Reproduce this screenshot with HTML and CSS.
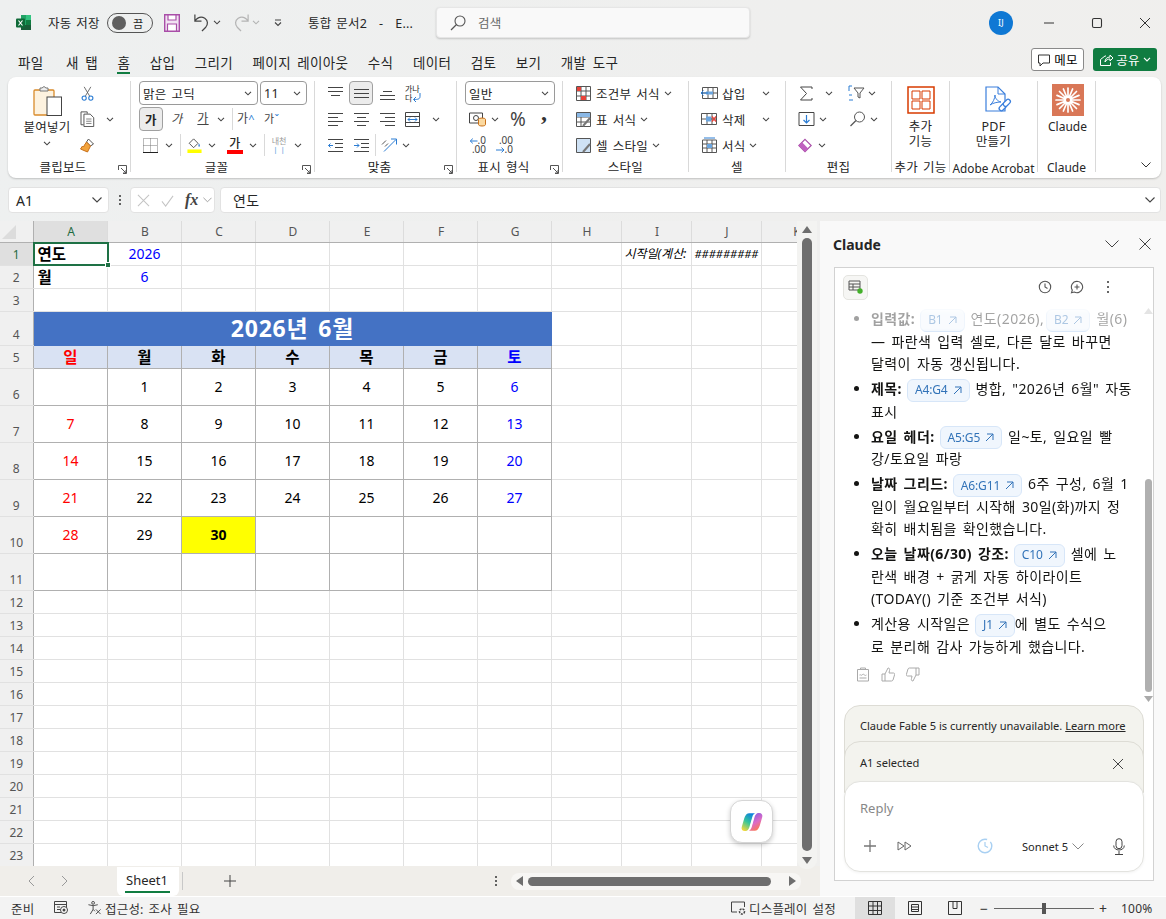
FILE: index.html
```html
<!DOCTYPE html>
<html lang="ko">

<head>
  <meta charset="UTF-8">
  <meta name="viewport" content="width=device-width, initial-scale=1.0">
  <title>통합 문서2 - Excel</title>
  <link rel="stylesheet" href="styles.css">
</head>

<body>
  <svg class="sprite">
    <symbol id="chev" viewBox="0 0 8 5"><path d="M1 .8l3 3 3-3" fill="none" stroke="#444" stroke-width="1.1"/></symbol>
    <symbol id="launch" viewBox="0 0 9 9"><path d="M.5 5V.5H8.500V8.500H5M3 3l5 5M8 5v3H5" fill="none" stroke="#555"/></symbol>
    <symbol id="lines4l" viewBox="0 0 15 15"><path d="M0 1.500h15M0 5.500h10M0 9.500h15M0 13.500h10" stroke="#444" fill="none"/></symbol>
    <symbol id="lines4c" viewBox="0 0 15 15"><path d="M0 1.500h15M3 5.500h9M0 9.500h15M3 13.500h9" stroke="#444" fill="none"/></symbol>
    <symbol id="lines4r" viewBox="0 0 15 15"><path d="M0 1.500h15M5 5.500h10M0 9.500h15M5 13.500h10" stroke="#444" fill="none"/></symbol>
  </svg>

  <header class="titlebar">
    <svg class="app-icon" viewBox="0 0 16 17"><path d="M5 1h10v15H5z" fill="#21a366"/><path d="M10 1h5v5h-5z" fill="#33c481"/><path d="M10 6h5v5h-5z" fill="#107c41"/><path d="M5 11h10v5H5z" fill="#185c37"/><rect y="4.500" width="9" height="9" rx="1" fill="#0f6a38"/><path d="M2.500 6.500l4 5M6.500 6.500l-4 5" stroke="#fff" stroke-width="1.200"/></svg>
    <span class="autosave">자동 저장</span>
    <div class="toggle"><span class="knob"></span><span>끔</span></div>
    <svg class="qa-save" viewBox="0 0 16 18"><path d="M.7.700h14.600v16.600H.7z" fill="#f1e3f2" stroke="#a94ea8" stroke-width="1.400"/><path d="M4 1h8v5H4zM3.500 10h9v7h-9z" fill="#fff" stroke="#a94ea8" stroke-width="1.200"/></svg>
    <svg class="qa-undo" viewBox="0 0 18 20"><path d="M2 1.500v7h7M2 8.500C5 4.500 9 3.500 12.500 5.500c3.500 2.500 3.500 6.500 1 9.500l-4 4" fill="none" stroke="#444" stroke-width="1.300"/></svg>
    <svg class="ch qa-c1"><use href="#chev"/></svg>
    <svg class="qa-redo" viewBox="0 0 18 20"><path d="M16 1.500v7H9M16 8.500C13 4.500 9 3.500 5.500 5.500c-3.500 2.500-3.500 6.500-1 9.500l4 4" fill="none" stroke="#b4b4b4" stroke-width="1.300"/></svg>
    <svg class="ch qa-c2 faint"><use href="#chev"/></svg>
    <svg class="qa-more" viewBox="0 0 8 8"><path d="M1 1h6M1 3.500l3 3 3-3" fill="none" stroke="#444" stroke-width="1.100"/></svg>
    <span class="doc-name">통합 문서2 <span class="dash">-</span> E...</span>
    <div class="search">
      <svg viewBox="0 0 16 16"><circle cx="10" cy="6" r="5" fill="none" stroke="#555" stroke-width="1.100"/><path d="M6.500 9.500L1 15" stroke="#555" stroke-width="1.200"/></svg>
      <span>검색</span>
    </div>
    <div class="avatar">IJ</div>
    <svg class="win-btn first" viewBox="0 0 12 12"><path d="M1 6h10" stroke="#333"/></svg>
    <svg class="win-btn" viewBox="0 0 12 12"><rect x="1.500" y="1.500" width="9" height="9" rx="1.500" fill="none" stroke="#333" stroke-width="1.100"/></svg>
    <svg class="win-btn" viewBox="0 0 12 12"><path d="M1 1l10 10M11 1L1 11" stroke="#333"/></svg>
  </header>

  <nav class="tabs">
    <a>파일</a><a class="new-tab">새 탭</a><a class="on">홈</a><a>삽입</a><a>그리기</a><a>페이지 레이아웃</a><a>수식</a><a>데이터</a><a>검토</a><a>보기</a><a>개발 도구</a>
    <button class="memo">
      <svg viewBox="0 0 14 14"><path d="M1.500 2h11v8H6l-3 3v-3H1.500z" fill="none" stroke="#333"/></svg>메모
    </button>
    <button class="share">
      <svg viewBox="0 0 14 14"><path d="M1.500 6.500v6h10v-3M1.500 6.500L6 3h1M6 9c0-3 2-5 5-5V2l3 3-3 3V6C9 6 7 7 6 9z" fill="none" stroke="#fff"/></svg>공유<svg class="ch white" viewBox="0 0 8 5"><path d="M1 .8l3 3 3-3" fill="none" stroke="#fff" stroke-width="1.200"/></svg>
    </button>
  </nav>

  <section class="ribbon">
    <!-- 클립보드 -->
    <div class="rg w-clip">
      <div class="rg-body clip">
        <div class="paste">
          <svg viewBox="0 0 30 30"><rect x="1" y="4" width="20" height="25" rx="1" fill="#fdf2df" stroke="#d98b2b" stroke-width="1.300"/><path d="M7 4V2h2l2-1.500L13 2h2v3H7z" fill="#eee" stroke="#777"/><rect x="14" y="11" width="14.500" height="18.500" fill="#fff" stroke="#444"/></svg>
          <span>붙여넣기</span>
          <svg class="ch"><use href="#chev"/></svg>
        </div>
        <div class="clip-tools">
          <div class="row"><svg class="ic ml1" viewBox="0 0 16 18"><path d="M4 1l6.500 11M12 1L5.500 12" stroke="#555" fill="none"/><circle cx="4" cy="14.500" r="2.500" fill="none" stroke="#2b7cd3" stroke-width="1.300"/><circle cx="12" cy="14.500" r="2.500" fill="none" stroke="#2b7cd3" stroke-width="1.300"/></svg></div>
          <div class="row"><svg class="ic-w" viewBox="0 0 16 18"><path d="M3.500 15.500H.7V1h7v2" fill="#fff" stroke="#444"/><path d="M4 3.500h7l4 4v10H4z" fill="#fff" stroke="#444"/><path d="M6.500 9h6M6.500 11.500h6M6.500 14h6" stroke="#777"/></svg><svg class="ch ml10"><use href="#chev"/></svg></div>
          <div class="row"><svg class="ic-w" viewBox="0 0 16 16"><path d="M9 2l5 5-3 2-4-4z" fill="#fff" stroke="#555"/><path d="M7 5l4 4-3 6-7-3 2-3 1 1 1-2z" fill="#f2a33c" stroke="#c8701a"/></svg></div>
        </div>
      </div>
      <div class="rg-label"><span>클립보드</span><svg class="launch"><use href="#launch"/></svg></div>
    </div>

    <!-- 글꼴 -->
    <div class="rg w-font">
      <div class="rg-body stack pl8">
        <div class="row">
          <div class="select s-font"><span>맑은 고딕</span><svg class="ch"><use href="#chev"/></svg></div>
          <div class="select s-size ml2"><span>11</span><svg class="ch"><use href="#chev"/></svg></div>
        </div>
        <div class="row">
          <div class="btn-on bold">가</div>
          <span class="gl ml7 it">가</span>
          <span class="gl ml12 un">가</span>
          <svg class="ch ml7"><use href="#chev"/></svg>
          <i class="vsep ml7"></i>
          <span class="gl gl-up ml4">가<b>^</b></span>
          <span class="gl gl-up ml9 small">가<b>ˇ</b></span>
        </div>
        <div class="row">
          <svg class="ic ml4" viewBox="0 0 15 15"><path d="M.5.500h14v14H.5zM7.500.500v14M.5 7.500h14" fill="none" stroke="#777" stroke-dasharray="1 1"/><path d="M0 14.500h15" stroke="#222"/></svg>
          <svg class="ch ml7"><use href="#chev"/></svg>
          <i class="vsep ml7"></i>
          <svg class="ic ml6" viewBox="0 0 16 17"><path d="M7 1l5 5-5 5-5-5z" fill="#fff" stroke="#444"/><path d="M13 6c1 1.500 1.500 3 .5 4-1 .5-1.500-1.500-.5-4z" fill="#2b7cd3"/><rect y="13" width="16" height="4" fill="#ffff00"/></svg>
          <svg class="ch ml6"><use href="#chev"/></svg>
          <div class="fcolor ml11">가</div>
          <svg class="ch ml6"><use href="#chev"/></svg>
          <i class="vsep ml7"></i>
          <div class="tiny-ko ml5">내천<span>ㅣㅣ</span></div>
          <svg class="ch ml6"><use href="#chev"/></svg>
        </div>
      </div>
      <div class="rg-label"><span>글꼴</span><svg class="launch"><use href="#launch"/></svg></div>
    </div>

    <!-- 맞춤 -->
    <div class="rg w-align">
      <div class="rg-body stack pl13">
        <div class="row">
          <svg class="ic" viewBox="0 0 15 15"><path d="M0 1.500h15M0 5.500h15M3 9.500h9" stroke="#444"/></svg>
          <div class="btn-on ml6"><svg class="ic" viewBox="0 0 15 15"><path d="M0 3.500h15M0 7.500h15M0 11.500h15" stroke="#444"/></svg></div>
          <svg class="ic ml7" viewBox="0 0 15 15"><path d="M3 5.500h9M0 9.500h15M0 13.500h15" stroke="#444"/></svg>
          <div class="wrap-ic ml10">가나<br>다<svg viewBox="0 0 9 9"><path d="M8 0v3.500C8 6 6 6.500 2 6.500M4 4L1.500 6.500 4 9" fill="none" stroke="#2b7cd3"/></svg></div>
        </div>
        <div class="row">
          <svg class="ic"><use href="#lines4l"/></svg>
          <svg class="ic ml11"><use href="#lines4c"/></svg>
          <svg class="ic ml11"><use href="#lines4r"/></svg>
          <svg class="ic ml10" viewBox="0 0 15 15"><path d="M.5.500h14v14H.5zM0 4.500h15M0 10.500h15" fill="#fff" stroke="#444"/><path d="M3 7.500h9M5 5.500l-2 2 2 2M10 5.500l2 2-2 2" fill="none" stroke="#2b7cd3"/></svg>
          <svg class="ch ml12"><use href="#chev"/></svg>
        </div>
        <div class="row">
          <svg class="ic" viewBox="0 0 15 15"><path d="M0 1.500h15M7 5.500h8M7 9.500h8M0 13.500h15" stroke="#444"/><path d="M5 7.500H.5M2.500 5.500l-2 2 2 2" fill="none" stroke="#2b7cd3"/></svg>
          <svg class="ic ml11" viewBox="0 0 15 15"><path d="M0 1.500h15M7 5.500h8M7 9.500h8M0 13.500h15" stroke="#444"/><path d="M0 7.500h5M3 5.500l2 2-2 2" fill="none" stroke="#2b7cd3"/></svg>
          <i class="vsep ml6"></i>
          <svg class="ic-w ml5" viewBox="0 0 17 15"><path d="M3 14L15 2M10 1.500h5.500V7" fill="none" stroke="#2b7cd3"/><path d="M1 7l4-4M4 9l3-3" stroke="#555"/></svg>
          <svg class="ch ml4"><use href="#chev"/></svg>
        </div>
      </div>
      <div class="rg-label"><span>맞춤</span><svg class="launch"><use href="#launch"/></svg></div>
    </div>

    <!-- 표시 형식 -->
    <div class="rg w-num">
      <div class="rg-body stack pl8">
        <div class="row"><div class="select s-num"><span>일반</span><svg class="ch"><use href="#chev"/></svg></div></div>
        <div class="row">
          <svg class="ic-w ml4" viewBox="0 0 17 15"><path d="M.5 1.500h13v10H.5z" fill="#fff" stroke="#444"/><circle cx="7" cy="6.500" r="2.500" fill="none" stroke="#444"/><ellipse cx="13" cy="8" rx="3.500" ry="1.500" fill="#fbd9a0" stroke="#c8701a"/><path d="M9.500 8v5c0 2 7 2 7 0V8" fill="#fbd9a0" stroke="#c8701a"/></svg>
          <svg class="ch ml5"><use href="#chev"/></svg>
          <span class="pct ml11">%</span>
          <span class="comma ml12">,</span>
        </div>
        <div class="row">
          <div class="dec ml4">.0<br>.00<svg class="top" viewBox="0 0 8 6"><path d="M8 3H.8M3.300.6L.8 3l2.500 2.400" fill="none" stroke="#2b7cd3"/></svg></div>
          <div class="dec ml10">.00<br>.0<svg class="bot" viewBox="0 0 9 6"><path d="M0 3h8M5.500.6L8 3 5.500 5.400" fill="none" stroke="#2b7cd3"/></svg></div>
        </div>
      </div>
      <div class="rg-label"><span>표시 형식</span><svg class="launch"><use href="#launch"/></svg></div>
    </div>

    <!-- 스타일 -->
    <div class="rg w-style">
      <div class="rg-body stack pl13">
        <div class="row"><svg class="ic" viewBox="0 0 15 15"><path d="M.5.500h14v14H.5zM5 .5v14M10 .5v14M.5 5h14M.5 10h14" fill="#fff" stroke="#555"/><path d="M1 1h4v4H1zM5 10h5v4H5z" fill="#e8433a"/></svg><span class="ml5">조건부 서식</span><svg class="ch ml4"><use href="#chev"/></svg></div>
        <div class="row"><svg class="ic" viewBox="0 0 15 15"><path d="M.5.500h14v14H.5zM.5 5h14M.5 10h14M5 .5v14" fill="#fff" stroke="#555"/><path d="M1 1h13v4H1z" fill="#8ab8e6"/><path d="M14 6L7 14" stroke="#777" stroke-width="2"/></svg><span class="ml5">표 서식</span><svg class="ch ml4"><use href="#chev"/></svg></div>
        <div class="row"><svg class="ic" viewBox="0 0 15 15"><path d="M.5.500h14v14H.5z" fill="#cfe2f5" stroke="#555"/><path d="M14 6L7 14" stroke="#777" stroke-width="2"/></svg><span class="ml5">셀 스타일</span><svg class="ch ml4"><use href="#chev"/></svg></div>
      </div>
      <div class="rg-label"><span>스타일</span></div>
    </div>

    <!-- 셀 -->
    <div class="rg w-cell">
      <div class="rg-body stack pl12">
        <div class="row"><svg class="ic-w" viewBox="0 0 17 15"><path d="M1.500 2h15v11h-15zM7 2v11M12 2v11M1.500 7.500h15" fill="#fff" stroke="#555"/><path d="M5 6h7v3H5z" fill="#6ba5de"/><path d="M7 7.500H0M2.500 5L0 7.500 2.500 10" fill="none" stroke="#2b7cd3"/></svg><span class="ml4">삽입</span><svg class="ch ml16"><use href="#chev"/></svg></div>
        <div class="row"><svg class="ic-w" viewBox="0 0 17 15"><path d="M.5 2h15v11H.5zM6 2v11M11 2v11M.5 7.500h15" fill="#fff" stroke="#555"/><path d="M5 5h5v5H5z" fill="#6ba5de"/><path d="M11 5l4 5M15 5l-4 5" stroke="#e8433a" stroke-width="1.300"/></svg><span class="ml4">삭제</span><svg class="ch ml16"><use href="#chev"/></svg></div>
        <div class="row"><svg class="ic-w" viewBox="0 0 17 16"><path d="M1.500 3h14v12.500h-14zM6 3v12M11 3v12M1.500 7h14M1.500 11h14" fill="#fff" stroke="#555"/><path d="M6 7h5v4H6z" fill="#6ba5de"/><path d="M3 1h11" stroke="#2b7cd3"/></svg><span class="ml4">서식</span><svg class="ch ml3"><use href="#chev"/></svg></div>
      </div>
      <div class="rg-label"><span>셀</span></div>
    </div>

    <!-- 편집 -->
    <div class="rg w-edit">
      <div class="rg-body stack pl13">
        <div class="row"><svg class="ic-s" viewBox="0 0 14 15"><path d="M13 3V1H1.500L7.500 7.500 1.500 14H13v-2" fill="none" stroke="#444"/></svg><svg class="ch ml12"><use href="#chev"/></svg><svg class="ic-w ml15" viewBox="0 0 17 16"><path d="M1 6V1h3M1 10h3M1 15h4" fill="none" stroke="#2b7cd3"/><path d="M6 3h10l-4 5v5l-2-1V8z" fill="#fff" stroke="#555"/></svg><svg class="ch ml3"><use href="#chev"/></svg></div>
        <div class="row"><svg class="ic-w ml-1" viewBox="0 0 16 16"><path d="M.5 1.500h15v13H.5z" fill="#fff" stroke="#444"/><path d="M8 4v8M5 9l3 3 3-3" fill="none" stroke="#2b7cd3" stroke-width="1.200"/></svg><svg class="ch ml4"><use href="#chev"/></svg><svg class="ic-w ml22" viewBox="0 0 16 16"><circle cx="10" cy="6" r="5" fill="#fff" stroke="#555"/><path d="M6.500 9.500L1 15" stroke="#555" stroke-width="1.300"/></svg><svg class="ch ml4"><use href="#chev"/></svg></div>
        <div class="row"><svg class="ic-s ml-1" viewBox="0 0 14 14"><path d="M7 .8L13.200 7 7 13.200.8 7z" fill="#fff" stroke="#a94ea8" stroke-width="1.200"/><path d="M.8 7L4 3.800 10.200 10 7 13.200z" fill="#c05fc0"/></svg><svg class="ch ml6"><use href="#chev"/></svg></div>
      </div>
      <div class="rg-label"><span>편집</span></div>
    </div>

    <!-- 추가 기능 -->
    <div class="rg w-addin">
      <div class="rg-body big">
        <svg class="big-ic" viewBox="0 0 28 28"><path d="M1 1h26v26H1z" fill="none" stroke="#d83b01" stroke-width="1.500"/><path d="M5 5h8v8H5zM15 5h8v8h-8zM5 15h8v8H5zM15 15h8v8h-8z" fill="none" stroke="#d83b01"/></svg>
        <span>추가<br>기능</span>
      </div>
      <div class="rg-label"><span>추가 기능</span></div>
    </div>

    <div class="rg w-pdf">
      <div class="rg-body big">
        <svg class="big-ic pdf-ic" viewBox="0 0 28 28"><path d="M2 1h12l7 7v17H2z" fill="#fff" stroke="#3a7fdc" stroke-width="1.200"/><path d="M14 1v7h7" fill="none" stroke="#3a7fdc"/><path d="M6 19c3-2 5-7 5-10 0 3 2 6 6 7-4 0-8 1-11 3z" fill="none" stroke="#3a7fdc"/><g fill="#fff" stroke="#3a7fdc" stroke-width="1.300"><rect x="14.500" y="19" width="8" height="4.500" rx="2.200" transform="rotate(-45 18.500 21)"/><rect x="19" y="14.500" width="8" height="4.500" rx="2.200" transform="rotate(-45 23 17)"/></g></svg>
        <span>PDF<br>만들기</span>
      </div>
      <div class="rg-label"><span>Adobe Acrobat</span></div>
    </div>

    <div class="rg w-claude">
      <div class="rg-body big">
        <svg class="big-ic claude-ic" viewBox="0 0 32 32"><rect width="32" height="32" fill="#d97757"/><path d="M16 16L28 16M16 16L27 20.600M16 16L24.500 24.500M16 16L20.600 27M16 16L16 28M16 16L11.400 27M16 16L7.500 24.500M16 16L5 20.600M16 16L4 16M16 16L5 11.400M16 16L7.500 7.500M16 16L11.400 5M16 16L16 4M16 16L20.600 5M16 16L24.500 7.500M16 16L27 11.400" stroke="#fff" stroke-width="1.700" stroke-linecap="round"/><circle cx="16" cy="16" r="2" fill="#d97757"/></svg>
        <span>Claude</span>
      </div>
      <div class="rg-label"><span>Claude</span></div>
    </div>

    <svg class="collapse" viewBox="0 0 10 6"><path d="M.5.500L5 5 9.500.5" fill="none" stroke="#333"/></svg>
  </section>

  <section class="formula">
    <div class="namebox"><span>A1</span><svg viewBox="0 0 10 6"><path d="M.5.500L5 5 9.500.5" fill="none" stroke="#444" stroke-width="1.100"/></svg></div>
    <div class="fdots"><i></i><i></i><i></i></div>
    <div class="fbtns">
      <svg viewBox="0 0 14 14"><path d="M1 1l12 12M13 1L1 13" stroke="#c4c4c4" stroke-width="1.100"/></svg>
      <svg viewBox="0 0 14 14"><path d="M1 8l4 5L13 2" fill="none" stroke="#c4c4c4" stroke-width="1.100"/></svg>
      <span class="fx">fx</span>
      <svg class="fx-ch" viewBox="0 0 10 6"><path d="M.5.500L5 5 9.500.5" fill="none" stroke="#999"/></svg>
    </div>
    <div class="finput"><span>연도</span><svg viewBox="0 0 10 6"><path d="M.5.500L5 5 9.500.5" fill="none" stroke="#444" stroke-width="1.100"/></svg></div>
  </section>

  <main class="workspace">
    <div class="sheet">
      <div class="sheet-top">
        <div class="grid-wrap">
          <table class="grid">
            <colgroup><col class="c-h"><col class="c-a"><col class="c-a"><col class="c-a"><col class="c-a"><col class="c-a"><col class="c-a"><col class="c-a"><col class="c-n"><col class="c-n"><col class="c-n"><col class="c-n"></colgroup>
            <tr class="r-head"><th class="corner"><svg viewBox="0 0 14 14"><path d="M14 0v14H0z" fill="#dcdcdc"/></svg></th><th class="sel">A</th><th>B</th><th>C</th><th>D</th><th>E</th><th>F</th><th>G</th><th>H</th><th>I</th><th>J</th><th>K</th></tr>
            <tr><th class="rn sel">1</th><td class="lbl active">연도<i class="handle"></i></td><td class="in">2026</td><td></td><td></td><td></td><td></td><td></td><td></td><td class="note">시작일(계산:</td><td class="note hash">#########</td><td></td></tr>
            <tr><th class="rn">2</th><td class="lbl">월</td><td class="in">6</td><td></td><td></td><td></td><td></td><td></td><td></td><td></td><td></td><td></td></tr>
            <tr><th class="rn">3</th><td></td><td></td><td></td><td></td><td></td><td></td><td></td><td></td><td></td><td></td><td></td></tr>
            <tr class="r-title"><th class="rn">4</th><td class="cal-title" colspan="7">2026년 6월</td><td></td><td></td><td></td><td></td></tr>
            <tr><th class="rn">5</th><td class="dow sun">일</td><td class="dow">월</td><td class="dow">화</td><td class="dow">수</td><td class="dow">목</td><td class="dow">금</td><td class="dow sat">토</td><td></td><td></td><td></td><td></td></tr>
            <tr class="r-week"><th class="rn">6</th><td class="d"></td><td class="d">1</td><td class="d">2</td><td class="d">3</td><td class="d">4</td><td class="d">5</td><td class="d sat">6</td><td></td><td></td><td></td><td></td></tr>
            <tr class="r-week"><th class="rn">7</th><td class="d sun">7</td><td class="d">8</td><td class="d">9</td><td class="d">10</td><td class="d">11</td><td class="d">12</td><td class="d sat">13</td><td></td><td></td><td></td><td></td></tr>
            <tr class="r-week"><th class="rn">8</th><td class="d sun">14</td><td class="d">15</td><td class="d">16</td><td class="d">17</td><td class="d">18</td><td class="d">19</td><td class="d sat">20</td><td></td><td></td><td></td><td></td></tr>
            <tr class="r-week"><th class="rn">9</th><td class="d sun">21</td><td class="d">22</td><td class="d">23</td><td class="d">24</td><td class="d">25</td><td class="d">26</td><td class="d sat">27</td><td></td><td></td><td></td><td></td></tr>
            <tr class="r-week"><th class="rn">10</th><td class="d sun">28</td><td class="d">29</td><td class="d today">30</td><td class="d"></td><td class="d"></td><td class="d"></td><td class="d"></td><td></td><td></td><td></td><td></td></tr>
            <tr class="r-week"><th class="rn">11</th><td class="d"></td><td class="d"></td><td class="d"></td><td class="d"></td><td class="d"></td><td class="d"></td><td class="d"></td><td></td><td></td><td></td><td></td></tr>
            <tr><th class="rn">12</th><td></td><td></td><td></td><td></td><td></td><td></td><td></td><td></td><td></td><td></td><td></td></tr>
            <tr><th class="rn">13</th><td></td><td></td><td></td><td></td><td></td><td></td><td></td><td></td><td></td><td></td><td></td></tr>
            <tr><th class="rn">14</th><td></td><td></td><td></td><td></td><td></td><td></td><td></td><td></td><td></td><td></td><td></td></tr>
            <tr><th class="rn">15</th><td></td><td></td><td></td><td></td><td></td><td></td><td></td><td></td><td></td><td></td><td></td></tr>
            <tr><th class="rn">16</th><td></td><td></td><td></td><td></td><td></td><td></td><td></td><td></td><td></td><td></td><td></td></tr>
            <tr><th class="rn">17</th><td></td><td></td><td></td><td></td><td></td><td></td><td></td><td></td><td></td><td></td><td></td></tr>
            <tr><th class="rn">18</th><td></td><td></td><td></td><td></td><td></td><td></td><td></td><td></td><td></td><td></td><td></td></tr>
            <tr><th class="rn">19</th><td></td><td></td><td></td><td></td><td></td><td></td><td></td><td></td><td></td><td></td><td></td></tr>
            <tr><th class="rn">20</th><td></td><td></td><td></td><td></td><td></td><td></td><td></td><td></td><td></td><td></td><td></td></tr>
            <tr><th class="rn">21</th><td></td><td></td><td></td><td></td><td></td><td></td><td></td><td></td><td></td><td></td><td></td></tr>
            <tr><th class="rn">22</th><td></td><td></td><td></td><td></td><td></td><td></td><td></td><td></td><td></td><td></td><td></td></tr>
            <tr><th class="rn">23</th><td></td><td></td><td></td><td></td><td></td><td></td><td></td><td></td><td></td><td></td><td></td></tr>
          </table>
        </div>
        <div class="vbar">
          <svg viewBox="0 0 10 7"><path d="M5 0l5 7H0z" fill="#6e6e6e"/></svg>
          <div class="vthumb"></div>
          <svg viewBox="0 0 10 7"><path d="M5 7l5-7H0z" fill="#6e6e6e"/></svg>
        </div>
        <div class="copilot">
          <svg viewBox="0 0 24 22">
            <defs>
              <linearGradient id="cpa" x1="0.700" y1="0" x2="0.200" y2="1"><stop offset="0" stop-color="#0b7fe0"/><stop offset=".5" stop-color="#36c59a"/><stop offset="1" stop-color="#f7d83a"/></linearGradient>
              <linearGradient id="cpb" x1="0.800" y1="1" x2="0.300" y2="0"><stop offset="0" stop-color="#7a58e6"/><stop offset=".55" stop-color="#dc6cc6"/><stop offset="1" stop-color="#ff7a45"/></linearGradient>
            </defs>
            <path d="M9 .5h6.500c-1.500.5-2.500 1.800-3 3.500L9 16c-.7 2-2 4-4 4H4C1.500 20 0 18 .7 15.500L3.500 6C4.500 2.500 6.500.5 9 .5z" fill="url(#cpa)" transform="translate(0 1)"/>
            <path d="M9 .5h6.500c-1.500.5-2.500 1.800-3 3.500L9 16c-.7 2-2 4-4 4H4C1.500 20 0 18 .7 15.500L3.500 6C4.500 2.500 6.500.5 9 .5z" fill="url(#cpb)" transform="rotate(180 12 11) translate(0 1)"/>
            <path d="M13.300 6.500L10.700 15.500" stroke="#fff" stroke-width="1.500" stroke-linecap="round"/>
          </svg>
        </div>
      </div>
      <div class="tabbar">
        <svg class="nav first" viewBox="0 0 7 12"><path d="M6 1L1 6l5 5" fill="none" stroke="#999"/></svg>
        <svg class="nav second" viewBox="0 0 7 12"><path d="M1 1l5 5-5 5" fill="none" stroke="#999"/></svg>
        <div class="sheet-tab">Sheet1</div>
        <i class="tab-sep"></i>
        <svg class="add" viewBox="0 0 12 12"><path d="M6 0v12M0 6h12" stroke="#444"/></svg>
        <div class="tdots"><i></i><i></i><i></i></div>
        <div class="hbar">
          <svg viewBox="0 0 7 10"><path d="M0 5l7-5v10z" fill="#6e6e6e"/></svg>
          <div class="hthumb"></div>
          <svg viewBox="0 0 7 10"><path d="M7 5L0 0v10z" fill="#6e6e6e"/></svg>
        </div>
      </div>
    </div>

    <aside class="panel">
      <div class="panel-head">
        <b>Claude</b>
        <svg class="ph-ch" viewBox="0 0 14 8"><path d="M.5.500L7 7 13.500.5" fill="none" stroke="#444"/></svg>
        <svg class="ph-x" viewBox="0 0 12 12"><path d="M.5.500l11 11M11.500.5l-11 11" stroke="#444"/></svg>
      </div>
      <div class="chat">
        <div class="chat-tools">
          <div class="sheet-btn"><svg viewBox="0 0 18 18"><path d="M2 3h11v9H2zM2 6h11M2 9h11M6 6v6" fill="none" stroke="#555"/><circle cx="13" cy="13" r="2.700" fill="#43b02a"/></svg></div>
          <svg class="ct first" viewBox="0 0 14 14"><circle cx="7" cy="7" r="5.700" fill="none" stroke="#555" stroke-width="1.100"/><path d="M7 3.500V7l2.500 1.500" fill="none" stroke="#555" stroke-width="1.100"/></svg>
          <svg class="ct" viewBox="0 0 14 14"><path d="M7 1.300a5.700 5.700 0 1 1-2.800 10.700L1.500 12.800l.8-2.700A5.700 5.700 0 0 1 7 1.300z" fill="none" stroke="#555" stroke-width="1.100"/><path d="M7 4.500v5M4.500 7h5" stroke="#555" stroke-width="1.100"/></svg>
          <div class="kebab"><i></i><i></i><i></i></div>
        </div>
        <div class="chat-body">
          <div class="msgs">
            <ul>
              <li class="first-li"><b class="light">입력값:</b><a class="chip">B1 <svg viewBox="0 0 9 9"><path d="M1 8l7-7M2 1h6v6" fill="none" stroke="currentColor"/></svg></a>연도(2026),<a class="chip second">B2 <svg viewBox="0 0 9 9"><path d="M1 8l7-7M2 1h6v6" fill="none" stroke="currentColor"/></svg></a>월(6)<br>— 파란색 입력 셀로, 다른 달로 바꾸면<br>달력이 자동 갱신됩니다.</li>
              <li><b>제목:</b><a class="chip">A4:G4 <svg viewBox="0 0 9 9"><path d="M1 8l7-7M2 1h6v6" fill="none" stroke="currentColor"/></svg></a>병합, "2026년 6월" 자동<br>표시</li>
              <li><b>요일 헤더:</b><a class="chip">A5:G5 <svg viewBox="0 0 9 9"><path d="M1 8l7-7M2 1h6v6" fill="none" stroke="currentColor"/></svg></a>일~토, 일요일 빨<br>강/토요일 파랑</li>
              <li><b>날짜 그리드:</b><a class="chip">A6:G11 <svg viewBox="0 0 9 9"><path d="M1 8l7-7M2 1h6v6" fill="none" stroke="currentColor"/></svg></a>6주 구성, 6월 1<br>일이 월요일부터 시작해 30일(화)까지 정<br>확히 배치됨을 확인했습니다.</li>
              <li><b>오늘 날짜(6/30) 강조:</b><a class="chip">C10 <svg viewBox="0 0 9 9"><path d="M1 8l7-7M2 1h6v6" fill="none" stroke="currentColor"/></svg></a>셀에 노<br>란색 배경 + 굵게 자동 하이라이트<br>(TODAY() 기준 조건부 서식)</li>
              <li>계산용 시작일은<a class="chip tight">J1 <svg viewBox="0 0 9 9"><path d="M1 8l7-7M2 1h6v6" fill="none" stroke="currentColor"/></svg></a>에 별도 수식으<br>로 분리해 감사 가능하게 했습니다.</li>
            </ul>
            <div class="feedback">
              <svg viewBox="0 0 13 15"><path d="M1 2.500h11V14H1zM4 2.500V1h5v1.500M3 8c1-1 1.500 1 2.500 0S7 7 8 8s1.500 0 2 0M3 11h7" fill="none" stroke="#aaa"/></svg>
              <svg viewBox="0 0 14 15"><path d="M4 7l3-6c1.500 0 2 1 1.500 2.500L8 6h4.500c1 0 1.500 1 1 2l-1.500 5c-.3.8-1 1-1.500 1H4zM4 7H1v7h3" fill="none" stroke="#aaa"/></svg>
              <svg viewBox="0 0 14 15"><path d="M10 8l-3 6c-1.500 0-2-1-1.500-2.500L6 9H1.500c-1 0-1.500-1-1-2L2 2c.3-.8 1-1 1.500-1H10zM10 8h3V1h-3" fill="none" stroke="#aaa"/></svg>
            </div>
          </div>
          <div class="mbar">
            <svg viewBox="0 0 9 6"><path d="M4.500 0L9 6H0z" fill="#e4e4e4"/></svg>
            <div class="mthumb"></div>
            <svg viewBox="0 0 9 6"><path d="M4.500 6L9 0H0z" fill="#aaa"/></svg>
          </div>
        </div>
        <div class="composer">
          <div class="notice">Claude Fable 5 is currently unavailable. <u>Learn more</u></div>
          <div class="notice selected"><span>A1 selected</span><svg viewBox="0 0 10 10"><path d="M0 0l10 10M10 0L0 10" stroke="#444"/></svg></div>
          <div class="reply">
            <div class="reply-text">Reply</div>
            <div class="reply-tools">
              <svg class="rt-plus" viewBox="0 0 12 12"><path d="M6 0v12M0 6h12" stroke="#777" stroke-width="1.300"/></svg>
              <svg class="rt-ff" viewBox="0 0 15 10"><path d="M1 1l6 4-6 4zM8 1l6 4-6 4z" fill="none" stroke="#666"/></svg>
              <svg class="rt-clock" viewBox="0 0 16 16"><circle cx="8" cy="8" r="6.800" fill="none" stroke="#a9d0f2" stroke-width="1.400" stroke-dasharray="34 4"/><path d="M8 4v4l3 1.500" fill="none" stroke="#a9d0f2" stroke-width="1.200"/></svg>
              <span class="model">Sonnet 5</span>
              <svg class="rt-ch" viewBox="0 0 12 7"><path d="M.5.500L6 6l5.500-5.500" fill="none" stroke="#888"/></svg>
              <svg class="rt-mic" viewBox="0 0 12 17"><rect x="3" y=".7" width="6" height="10" rx="3" fill="none" stroke="#444"/><path d="M.7 7.500c0 6 10.600 6 10.600 0M6 13v3.500M2 16.500h8" fill="none" stroke="#444"/></svg>
            </div>
          </div>
        </div>
      </div>
    </aside>
  </main>

  <footer class="status">
    <span class="st-ready">준비</span>
    <svg class="st-ic" viewBox="0 0 15 14"><path d="M.5.500h12v11H.5zM.5 3.500h12M3 6h3M3 8.500h3" fill="none" stroke="#444"/><circle cx="10" cy="9" r="3.500" fill="#fff" stroke="#444"/><circle cx="10" cy="9" r="1.500" fill="#444"/></svg>
    <svg class="st-ic acc" viewBox="0 0 15 15"><circle cx="6" cy="2" r="1.500" fill="none" stroke="#444"/><path d="M1 4l5 1 5-1M6 5v4l-3 5M6 9l2 2" fill="none" stroke="#444"/><path d="M9 9l5 5M14 9l-5 5" stroke="#444"/></svg>
    <span class="st-acc">접근성: 조사 필요</span>
    <svg class="st-ic disp" viewBox="0 0 15 14"><path d="M6 11H.5V1h13v5" fill="none" stroke="#444"/><circle cx="11" cy="10.500" r="2.500" fill="none" stroke="#444" stroke-width="1.500" stroke-dasharray="2 1"/></svg>
    <span class="st-disp">디스플레이 설정</span>
    <div class="view on"><svg viewBox="0 0 14 14"><path d="M.5.500h13v13H.5zM5 .5v13M9.500.5v13M.5 5h13M.5 9.500h13" fill="none" stroke="#333"/></svg></div>
    <div class="view"><svg viewBox="0 0 14 14"><path d="M.5.500h13v13H.5z" fill="none" stroke="#333"/><path d="M3.500 3.500h7v7h-7zM3.500 6h7M3.500 8.500h7" fill="none" stroke="#333"/></svg></div>
    <div class="view"><svg viewBox="0 0 14 14"><path d="M.5.500h13v13H.5zM5 .5v7h4V.5" fill="none" stroke="#333"/></svg></div>
    <div class="zoom-bar">
      <span class="zm">−</span>
      <div class="slider"><i></i></div>
      <span class="zm">+</span>
      <span class="pc">100%</span>
    </div>
  </footer>
</body>

</html>
```

FILE: styles.css
```css
* {
  margin: 0;
  padding: 0;
  box-sizing: border-box;
}

html,
body {
  width: 1166px;
  height: 919px;
  overflow: hidden;
}

body {
  font-family: "Noto Sans", "Noto Sans CJK KR", sans-serif;
  font-size: 12px;
  color: #262626;
  background: linear-gradient(100deg, #eef0f0 0%, #efefee 60%, #f0efed 100%);
  display: flex;
  flex-direction: column;
}

.sprite {
  display: none;
}

svg {
  display: block;
  flex: none;
}

i {
  font-style: normal;
}

/* margin helpers for the ribbon rows */
.ml-1 { margin-left: -1px; }
.ml1 { margin-left: 1px; }
.ml2 { margin-left: 2px; }
.ml3 { margin-left: 3px; }
.ml4 { margin-left: 4px; }
.ml5 { margin-left: 5px; }
.ml6 { margin-left: 6px; }
.ml7 { margin-left: 7px; }
.ml9 { margin-left: 9px; }
.ml10 { margin-left: 10px; }
.ml11 { margin-left: 11px; }
.ml12 { margin-left: 12px; }
.ml15 { margin-left: 15px; }
.ml16 { margin-left: 16px; }
.ml22 { margin-left: 22px; }
.pl8 { padding-left: 8px; }
.pl12 { padding-left: 12px; }
.pl13 { padding-left: 13px; }

/* title bar */
.titlebar {
  height: 45px;
  display: flex;
  align-items: center;
  padding-left: 16px;
  flex: none;
  font-size: 12.500px;
  letter-spacing: .2px;
  word-spacing: 1.500px;
}

.app-icon {
  width: 16px;
  height: 17px;
}

.autosave {
  margin-left: 16px;
  width: 52px;
  white-space: nowrap;
}

.toggle {
  margin-left: 7px;
  width: 46px;
  height: 20px;
  border: 1px solid #555;
  border-radius: 10px;
  display: flex;
  align-items: center;
  padding-left: 4px;
  font-size: 11px;
  gap: 7px;
}

.knob {
  width: 14px;
  height: 14px;
  border-radius: 50%;
  background: #5f5f5f;
}

.qa-save { width: 16px; height: 18px; margin-left: 11px; }
.qa-undo { width: 17px; height: 19px; margin-left: 13px; }
.ch { width: 8px; height: 5px; }
.qa-c1 { margin-left: 3px; }
.qa-redo { width: 17px; height: 19px; margin-left: 12px; }
.qa-c2 { margin-left: 2px; }
.faint { opacity: .35; }
.qa-more { width: 8px; height: 8px; margin-left: 14px; }

.doc-name {
  margin-left: 26px;
  width: 128px;
  white-space: nowrap;
}

.dash {
  margin: 0 7px;
}

.search {
  width: 314px;
  height: 31px;
  background: #f9f9f9;
  border: 1px solid #e6e6e6;
  border-radius: 4px;
  box-shadow: 0 1px 2px rgba(0, 0, 0, .18);
  display: flex;
  align-items: center;
  padding-left: 13px;
  gap: 12px;
  color: #666;
}

.search svg {
  width: 16px;
  height: 16px;
}

.avatar {
  margin-left: auto;
  width: 24px;
  height: 24px;
  border-radius: 50%;
  background: #0f78d4;
  color: #fff;
  font-size: 9px;
  text-align: center;
  line-height: 24px;
}

.win-btn {
  width: 12px;
  height: 12px;
  margin-left: 36px;
}

.win-btn.first {
  margin-left: 30px;
}

.win-btn:last-child {
  margin-right: 15px;
}

/* ribbon tabs */
.tabs {
  height: 32px;
  flex: none;
  display: flex;
  align-items: center;
  padding-left: 18px;
  gap: 19.500px;
  font-size: 13.500px;
  letter-spacing: .35px;
  word-spacing: 2.500px;
}

.tabs a {
  position: relative;
  white-space: nowrap;
  line-height: 20px;
  padding-top: 3px;
}

.tabs a.new-tab {
  margin-left: 3px;
}

.tabs a.on::after {
  content: "";
  position: absolute;
  left: 0;
  right: 0;
  bottom: -1px;
  height: 2px;
  background: #107c41;
}

.memo,
.share {
  height: 23px;
  border-radius: 3px;
  font: inherit;
  font-size: 12.500px;
  letter-spacing: .3px;
  display: flex;
  align-items: center;
  justify-content: center;
  gap: 3px;
}

.memo {
  margin-left: auto;
  width: 53px;
  background: #fff;
  border: 1px solid #8a8a8a;
  margin-bottom: 3px;
}

.memo svg,
.share svg:first-child {
  width: 14px;
  height: 14px;
}

.share {
  width: 64px;
  margin: 0 9px 3px -10.500px;
  background: #107c41;
  color: #fff;
  border: 0;
}

/* ribbon */
.ribbon {
  margin: 0 5px 0 8px;
  height: 101px;
  flex: none;
  background: #fff;
  border-radius: 8px;
  box-shadow: 0 1px 2px rgba(0, 0, 0, .2);
  display: flex;
  padding-top: 4px;
  position: relative;
  font-size: 12.500px;
  letter-spacing: .25px;
  word-spacing: 1.500px;
}

.rg {
  height: 91px;
  flex: none;
  border-right: 1px solid #d9d9d9;
  display: flex;
  flex-direction: column;
}

.w-clip { width: 123px; }
.w-font { width: 184px; }
.w-align { width: 142px; }
.w-num { width: 106px; }
.w-style { width: 126px; }
.w-cell { width: 97px; }
.w-edit { width: 106px; }
.w-addin { width: 58px; }
.w-pdf { width: 88px; }
.w-claude { width: 58px; }

.w-claude,
.w-pdf .rg-label {
  font-size: 12px;
  letter-spacing: 0;
  word-spacing: 0;
}

.w-pdf .rg-label {
  font-size: 11.800px;
}

.w-claude .rg-body {
  padding-left: 2px;
}

.rg-body {
  height: 78px;
  flex: none;
}

.rg-label {
  display: flex;
  align-items: center;
  height: 16px;
  line-height: 16px;
  padding-top: 1px;
  white-space: nowrap;
}

.rg-label span {
  flex: 1;
  text-align: center;
}

.launch {
  width: 9px;
  height: 9px;
  margin: 3px 3px 0 0;
}

.stack {
  display: flex;
  flex-direction: column;
  gap: 2px;
}

.row {
  height: 24px;
  display: flex;
  align-items: center;
  white-space: nowrap;
}

.ic { width: 15px; height: 15px; }
.ic-w { width: 17px; height: 16px; }
.ic-s { width: 14px; height: 15px; }

.vsep {
  width: 1px;
  height: 22px;
  background: #d9d9d9;
}

.clip {
  display: flex;
}

.paste {
  width: 50px;
  margin-left: 14px;
  display: flex;
  flex-direction: column;
  align-items: center;
  white-space: nowrap;
}

.paste > svg:first-child {
  width: 30px;
  height: 30px;
  margin: 5px 0 3px 2px;
}

.paste span {
  line-height: 18px;
}

.paste .ch {
  margin-top: 4px;
}

.clip-tools {
  margin-left: 7px;
  display: flex;
  flex-direction: column;
  gap: 2px;
}

.select {
  height: 24px;
  border: 1px solid #9a9a9a;
  border-radius: 4px;
  display: flex;
  align-items: center;
  justify-content: space-between;
  padding: 0 5px 0 3px;
  background: #fff;
}

.s-font { width: 119px; }
.s-size { width: 47px; }
.s-num { width: 90px; }

.btn-on {
  width: 24px;
  height: 24px;
  background: #ececec;
  border: 1px solid #a0a0a0;
  border-radius: 4px;
  display: flex;
  align-items: center;
  justify-content: center;
}

.bold {
  font-weight: 700;
}

.gl {
  width: 14px;
  text-align: center;
  color: #444;
  font-size: 12px;
  line-height: 16px;
}

.it {
  font-style: italic;
}

.un {
  text-decoration: underline;
}

.gl-up {
  width: 18px;
  display: flex;
}

.gl-up b {
  color: #2b7cd3;
  font-size: 11px;
  font-weight: 400;
}

.small {
  font-size: 11px;
}

.fcolor {
  width: 16px;
  height: 17px;
  border-bottom: 4px solid #ff0000;
  font-size: 12px;
  line-height: 13px;
  font-weight: 500;
  text-align: center;
}

.tiny-ko {
  width: 18px;
  font-size: 8px;
  line-height: 9px;
  letter-spacing: 0;
  color: #999;
  text-align: center;
}

.tiny-ko span {
  display: block;
  color: #6aa6e0;
}

.wrap-ic {
  width: 16px;
  font-size: 8px;
  line-height: 9px;
  letter-spacing: 0;
  position: relative;
}

.wrap-ic svg {
  width: 9px;
  height: 9px;
  position: absolute;
  right: 0;
  bottom: 0;
}

.pct {
  width: 16px;
  font-size: 19px;
  line-height: 20px;
  text-align: center;
  color: #444;
}

.comma {
  width: 12px;
  font-size: 24px;
  line-height: 10px;
  font-weight: 700;
  font-family: "Liberation Serif", serif;
  text-align: center;
  color: #333;
  height: 24px;
}

.dec {
  position: relative;
  width: 17px;
  font-size: 10px;
  line-height: 9px;
  letter-spacing: 0;
  text-align: right;
  color: #444;
}

.dec svg {
  position: absolute;
  left: 0;
  width: 9px;
  height: 6px;
}

.dec .top { top: 2px; }
.dec .bot { top: 11px; }

.big {
  display: flex;
  flex-direction: column;
  align-items: center;
  text-align: center;
  line-height: 15px;
}

.big-ic {
  width: 28px;
  height: 28px;
  margin: 5px 0 5px;
}

.pdf-ic {
  margin-left: 8px;
}

.claude-ic {
  width: 32px;
  height: 32px;
  margin: 3px 0 3px;
}

.collapse {
  width: 10px;
  height: 6px;
  align-self: flex-end;
  margin: 0 0 10px 45px;
}

/* formula bar */
.formula {
  margin: 9px 5px 8px 8px;
  height: 26px;
  flex: none;
  display: flex;
  align-items: stretch;
}

.namebox,
.fbtns,
.finput {
  background: #fff;
  border: 1px solid #e2e2e2;
  border-radius: 4px;
  display: flex;
  align-items: center;
}

.namebox {
  width: 101px;
  padding: 0 6px 0 7px;
  justify-content: space-between;
  font-size: 14px;
}

.namebox svg,
.finput svg {
  width: 10px;
  height: 6px;
}

.fdots {
  width: 21px;
  display: flex;
  flex-direction: column;
  align-items: center;
  justify-content: center;
  gap: 2px;
}

.fdots i,
.tdots i,
.kebab i {
  width: 2px;
  height: 2px;
  background: #333;
  border-radius: 50%;
}

.fbtns {
  width: 85px;
  padding-left: 6px;
}

.fbtns svg {
  width: 13px;
  height: 13px;
  margin-right: 11px;
}

.fbtns .fx-ch {
  width: 9px;
  height: 6px;
  margin: 0 0 0 3px;
}

.fx {
  font-family: "Liberation Serif", serif;
  font-style: italic;
  font-weight: 700;
  font-size: 16px;
  width: 15px;
  color: #444;
}

.finput {
  margin-left: 5px;
  flex: 1;
  padding: 0 5px 0 12px;
  justify-content: space-between;
  font-size: 14px;
  letter-spacing: .4px;
}

/* sheet */
.workspace {
  height: 675px;
  flex: none;
  display: flex;
}

.sheet {
  width: 820px;
  flex: none;
  display: flex;
  flex-direction: column;
}

.sheet-top {
  height: 645px;
  display: flex;
  position: relative;
}

.grid-wrap {
  width: 797px;
  overflow: hidden;
  background: #fff;
}

.grid {
  table-layout: fixed;
  border-collapse: collapse;
  width: 831px;
  font-size: 14px;
  line-height: 18px;
  color: #000;
}

.c-h { width: 33px; }
.c-a { width: 74px; }
.c-n { width: 70px; }

.grid tr {
  height: 23px;
}

.grid .r-head { height: 21px; }
.grid .r-title { height: 34px; }
.grid .r-week { height: 37px; }

.grid th {
  font-weight: 400;
  font-size: 12px;
  color: #555;
  background: #f0f0f0;
  border-right: 1px solid #dcdcdc;
  border-bottom: 1px solid #b0b0b0;
}

.grid .r-head th {
  padding: 1px 0 0 2px;
}

.grid .corner {
  border-right: 1px solid #b0b0b0;
  padding: 5px 0 0 17px;
}

.corner svg {
  width: 14px;
  height: 14px;
}

.grid th.sel {
  background: #dfdfdf;
  color: #1e6b41;
}

.grid .rn {
  border-right: 1px solid #b0b0b0;
  border-bottom: 1px solid #e1e1e1;
  vertical-align: bottom;
  line-height: 20px;
}

.grid td {
  border: 1px solid #e1e1e1;
  text-align: center;
  white-space: nowrap;
  overflow: hidden;
  padding-left: 1px;
}

.grid td.lbl {
  text-align: left;
  padding-left: 4px;
  font-size: 15.500px;
  font-weight: 700;
}

.grid td.active {
  position: relative;
  overflow: visible;
}

.active::after {
  content: "";
  position: absolute;
  inset: -1px -2px -1px -1px;
  border: 2px solid #1e7145;
}

.handle {
  position: absolute;
  z-index: 1;
  right: -4px;
  bottom: -3px;
  width: 6px;
  height: 6px;
  background: #1e7145;
  border: 1px solid #fff;
}

.in {
  color: #0000ff;
}

.grid td.note {
  font-size: 12px;
  font-style: italic;
  text-align: left;
  padding-left: 3px;
}

.grid td.hash {
  font-size: 11px;
}

.grid td.cal-title {
  background: #4472c4;
  border-color: #4472c4;
  color: #fff;
  font-size: 23px;
  font-weight: 700;
  letter-spacing: .8px;
  word-spacing: 3px;
  line-height: 30px;
}

.grid td.dow {
  background: #d9e2f3;
  border-color: #b0b0b0;
  font-size: 15.500px;
  font-weight: 700;
}

.grid td.d {
  border-color: #b0b0b0;
  font-size: 14px;
}

.grid td.sun { color: #ff0000; }
.grid td.sat { color: #0000ff; }

.grid td.today {
  background: #ffff00;
  font-weight: 700;
}

.vbar {
  width: 20px;
  margin-bottom: -3px;
  background: #f3f3f1;
  border-radius: 0 0 9px 9px;
  display: flex;
  flex-direction: column;
  align-items: center;
  padding: 5px 0 5px;
}

.vbar svg {
  width: 10px;
  height: 7px;
}

.vthumb {
  width: 10px;
  height: 613px;
  margin: 5px 0 auto;
  background: #6e6e6e;
  border-radius: 5px;
}

.copilot {
  position: absolute;
  left: 730px;
  top: 579px;
  width: 43px;
  height: 43px;
  background: #fff;
  border: 1px solid #d6d6d6;
  border-radius: 12px;
  box-shadow: 0 2px 5px rgba(0, 0, 0, .2);
  display: flex;
  align-items: center;
  justify-content: center;
}

.copilot svg {
  width: 22px;
  height: 20px;
}

/* sheet tabs */
.tabbar {
  height: 30px;
  display: flex;
  align-items: center;
  background: #f0eeea;
}

.nav {
  width: 7px;
  height: 12px;
}

.nav.first { margin-left: 28px; }
.nav.second { margin-left: 26px; }

.sheet-tab {
  margin: 0 0 0 49px;
  width: 62px;
  height: 29px;
  padding-right: 2px;
  background: #fff;
  border-radius: 0 0 6px 6px;
  text-align: center;
  font-size: 13px;
  line-height: 26px;
  position: relative;
}

.sheet-tab::after {
  content: "";
  position: absolute;
  left: 8px;
  right: 9px;
  bottom: 3px;
  height: 2px;
  background: #107c41;
}

.tab-sep {
  width: 1px;
  height: 18px;
  margin-left: 3px;
  background: #c8c8c8;
}

.add {
  width: 12px;
  height: 12px;
  margin-left: 41px;
}

.tdots {
  margin-left: 258px;
  width: 3px;
  display: flex;
  flex-direction: column;
  gap: 2px;
  align-items: center;
}

.hbar {
  margin-left: 14px;
  width: 290px;
  height: 17px;
  background: #f7f6f4;
  border-radius: 8px;
  display: flex;
  align-items: center;
  padding: 0 5px;
}

.hbar svg {
  width: 7px;
  height: 10px;
}

.hthumb {
  width: 243px;
  height: 9px;
  margin: 0 auto 0 5px;
  background: #6e6e6e;
  border-radius: 5px;
}

/* claude panel */
.panel {
  width: 346px;
  flex: none;
  min-width: 0;
  background: #f9f9f9;
  display: flex;
  flex-direction: column;
  padding: 0 12px 15px 14px;
}

.panel-head {
  height: 46px;
  display: flex;
  align-items: center;
  font-size: 14px;
}

.panel-head b {
  margin-left: -1px;
}

.ph-ch {
  width: 14px;
  height: 8px;
  margin-left: auto;
}

.ph-x {
  width: 12px;
  height: 12px;
  margin: 0 3px 0 20px;
}

.chat {
  flex: 1;
  background: #fff;
  border: 1px solid #d2d2d2;
  display: flex;
  flex-direction: column;
  min-height: 0;
  min-width: 0;
}

.chat-tools {
  height: 38px;
  flex: none;
  display: flex;
  align-items: center;
  padding: 0 0 0 8px;
}

.sheet-btn {
  width: 25px;
  height: 25px;
  background: #f6f6f4;
  border: 1px solid #e4e4e0;
  border-radius: 5px;
  display: flex;
  align-items: center;
  justify-content: center;
}

.sheet-btn svg {
  width: 18px;
  height: 18px;
}

.ct {
  width: 14px;
  height: 14px;
  margin-left: 18px;
}

.ct.first {
  margin-left: 170px;
}

.kebab {
  margin-left: 22px;
  width: 3px;
  display: flex;
  flex-direction: column;
  align-items: center;
  gap: 3px;
}

.chat-body {
  height: 399px;
  flex: none;
  display: flex;
}

.msgs {
  flex: 1;
  min-width: 0;
  overflow: hidden;
  font-size: 14px;
  line-height: 22px;
  letter-spacing: .4px;
  word-spacing: 2px;
  color: #141413;
  -webkit-mask-image: linear-gradient(#0000 0, #0006 8px, #0006 22px, #000 26px);
  mask-image: linear-gradient(#0000 0, #0006 8px, #0006 22px, #000 26px);
}

.msgs ul {
  padding: 2px 0 0 36px;
  white-space: nowrap;
}

.msgs li {
  margin-bottom: 3px;
}

.msgs li::marker {
  font-size: 14px;
}

.chip {
  display: inline-flex;
  align-items: center;
  gap: 5px;
  height: 23px;
  margin: -1px 6px -1px 5px;
  padding: 0 7px;
  vertical-align: middle;
  background: #f0f6fd;
  border: 1px solid #d7e6f8;
  border-radius: 6px;
  color: #3273b8;
  font-size: 12px;
  font-weight: 400;
  letter-spacing: -.15px;
  word-spacing: 0;
  line-height: 20px;
}

.chip svg {
  width: 9px;
  height: 9px;
}

.chip.second {
  margin-left: 2px;
}

.chip.tight {
  margin-right: 0;
}

.feedback {
  display: flex;
  gap: 11px;
  padding: 6px 0 0 21px;
}

.feedback svg {
  width: 14px;
  height: 15px;
}

.mbar {
  width: 10px;
  flex: none;
  display: flex;
  flex-direction: column;
  align-items: center;
}

.mbar svg {
  width: 9px;
  height: 6px;
}

.mbar svg:first-child {
  margin-top: 2px;
}

.mthumb {
  width: 7px;
  height: 213px;
  margin: 165px 0 4px;
  background: #b0b0b0;
  border-radius: 4px;
}

.composer {
  margin: 0 9px 8px;
  font-size: 11.100px;
}

.notice {
  height: 52px;
  background: #f3f3ee;
  border: 1px solid #dddcd5;
  border-radius: 16px 16px 0 0;
  padding: 11px 15px 0;
  line-height: 18px;
  white-space: nowrap;
}

.notice.selected {
  margin-top: -16px;
  display: flex;
  justify-content: space-between;
  padding-top: 12px;
}

.notice.selected svg {
  width: 10px;
  height: 10px;
  margin: 5px 5px 0 0;
}

.reply {
  margin-top: -12px;
  height: 91px;
  position: relative;
  background: #fff;
  border: 1px solid #e3e3df;
  border-radius: 16px;
  box-shadow: 0 1px 3px rgba(0, 0, 0, .05);
}

.reply-text {
  padding: 16px 0 0 15px;
  font-size: 13px;
  line-height: 20px;
  color: #888;
}

.reply-tools {
  display: flex;
  align-items: center;
  margin-top: 18px;
  height: 20px;
}

.rt-plus { width: 12px; height: 12px; margin-left: 19px; }
.rt-ff { width: 15px; height: 10px; margin-left: 21px; }
.rt-clock { width: 16px; height: 16px; margin-left: 65px; }
.model { margin-left: 29px; white-space: nowrap; }
.rt-ch { width: 12px; height: 7px; margin-left: 4px; }
.rt-mic { width: 12px; height: 17px; margin-left: 29px; }

/* status bar */
.status {
  height: 23px;
  flex: none;
  background: #f3f3f3;
  border-top: 1px solid #fff;
  display: flex;
  align-items: center;
  white-space: nowrap;
  font-size: 12.500px;
  letter-spacing: .2px;
  word-spacing: 1.500px;
  color: #333;
}

.st-ready { margin-left: 11px; width: 24px; }
.st-ic { width: 15px; height: 14px; margin-left: 19px; }
.st-ic.acc { margin-left: 18px; }
.st-acc { margin-left: 3px; width: 95px; }
.st-ic.disp { margin-left: 531px; }
.st-disp { margin-left: 3px; width: 88px; }

.view {
  width: 40px;
  height: 100%;
  display: flex;
  align-items: center;
  justify-content: center;
}

.view.on {
  margin-left: 18px;
  background: #dfdfdf;
}

.view svg {
  width: 14px;
  height: 14px;
}

.zoom-bar {
  display: flex;
  align-items: center;
  margin-left: 3px;
}

.zm {
  width: 12px;
  text-align: center;
  font-size: 14px;
}

.slider {
  width: 100px;
  height: 1px;
  margin: 0 3px 0 4px;
  background: #666;
  position: relative;
}

.slider i {
  position: absolute;
  left: 48px;
  top: -5px;
  width: 4px;
  height: 11px;
  background: #555;
}

.pc {
  margin-left: 12px;
  font-size: 12px;
}
```
